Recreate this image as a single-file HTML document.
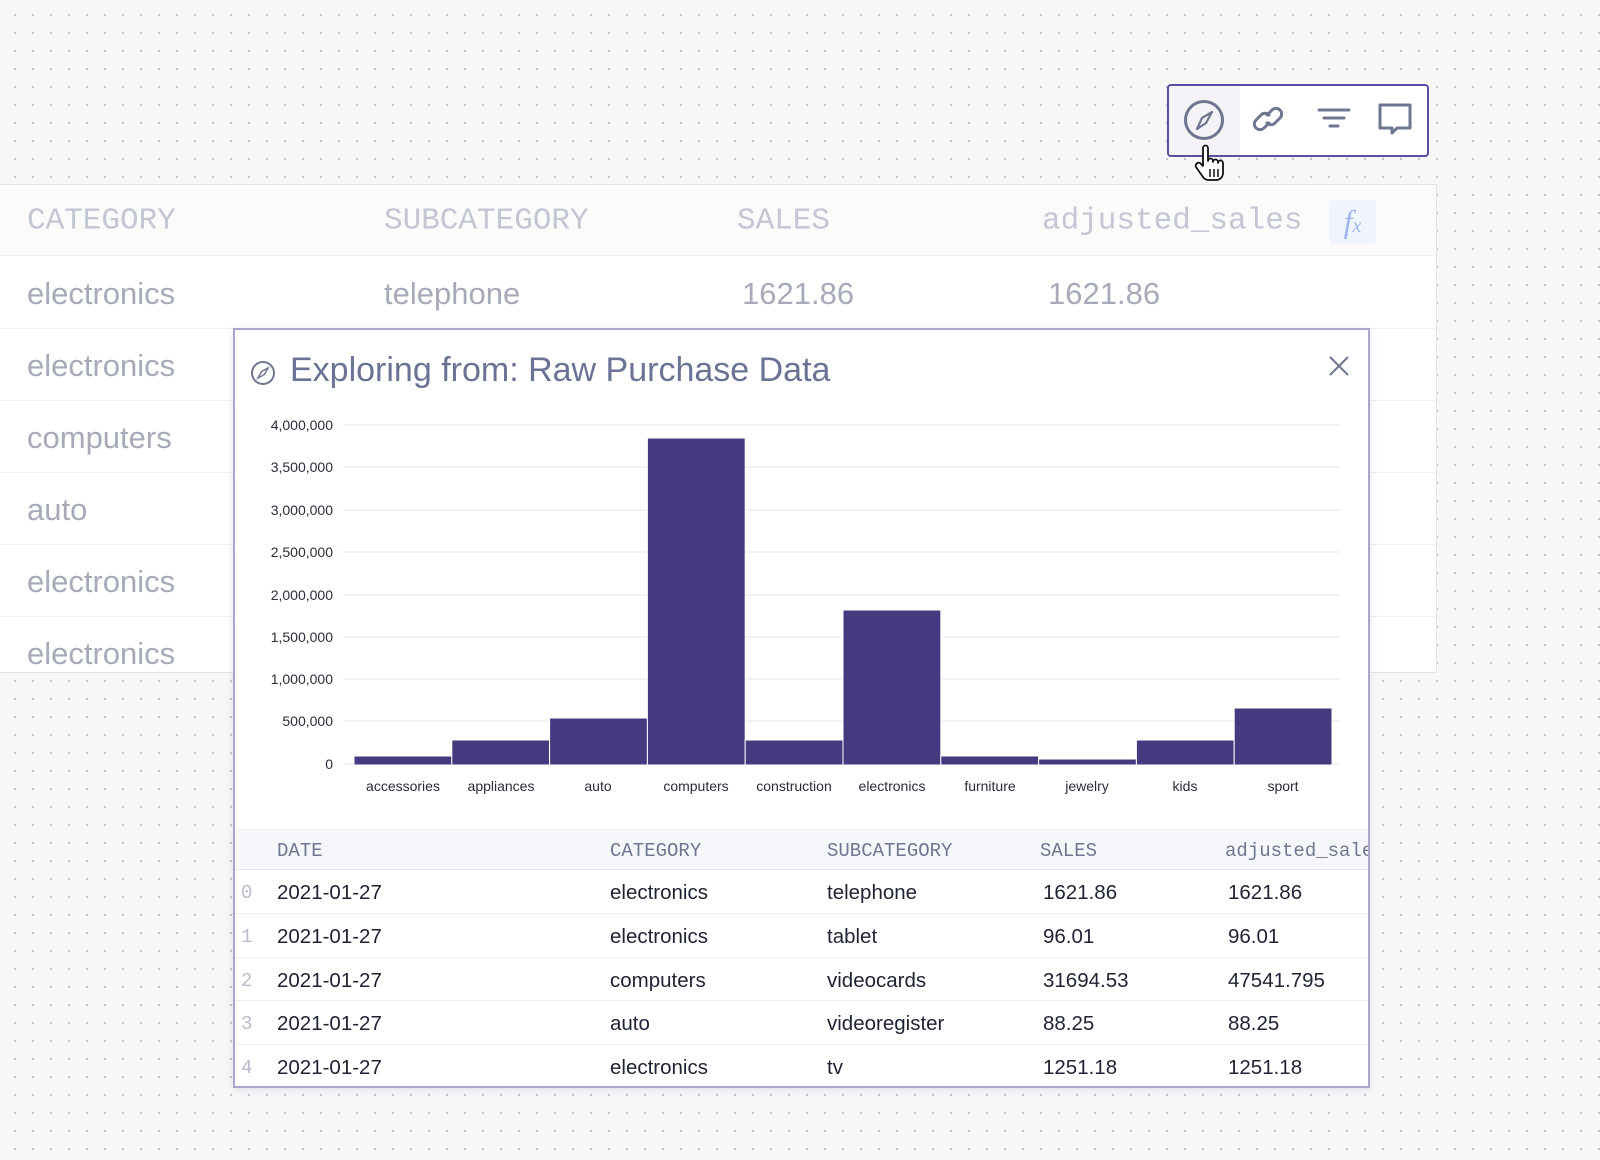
<!DOCTYPE html>
<html><head><meta charset="utf-8"><style>
*{margin:0;padding:0;box-sizing:border-box}
body{width:1600px;height:1160px;position:relative;overflow:hidden;background-color:#f8f7f8;background-image:radial-gradient(circle,#c4c3c8 1px,transparent 1.4px);background-size:18px 18px;background-position:6px 6px;font-family:"Liberation Sans",sans-serif}
.a{position:absolute;white-space:nowrap}
.bt{position:absolute;left:0;top:184px;width:1437px;height:489px;background:#fff;border:1px solid #e2e2ea;border-left:none;overflow:hidden}
.bh{position:absolute;left:0;top:0;width:100%;height:71px;background:#fbfbfc;border-bottom:1px solid #f0f0f3}
.mono{font-family:"Liberation Mono",monospace}
.bgh{color:#c3c6d3;font-size:31px;transform:translateY(-50%)}
.bgr{color:#a7aab8;font-size:31px;transform:translateY(-50%)}
.sep{position:absolute;left:0;width:100%;height:1px;background:#f0f0f3}
.modal{position:absolute;left:233px;top:328px;width:1137px;height:760px;background:#fff;border:2px solid #a9a5cc;overflow:hidden;box-shadow:0 2px 8px rgba(60,50,120,.12)}
.th{color:#6f7690;font-size:19px;transform:translateY(-50%)}
.td{color:#1f2233;font-size:20.5px;transform:translateY(-50%)}
.ix{color:#b9bcca;font-size:19px;transform:translateY(-50%)}
</style></head><body>
<div class="bt">
 <div class="bh"></div>
 <div class="sep" style="top:143px"></div><div class="sep" style="top:215px"></div><div class="sep" style="top:287px"></div><div class="sep" style="top:359px"></div><div class="sep" style="top:431px"></div>
 <div class="a mono bgh" style="left:27px;top:36px">CATEGORY</div>
 <div class="a mono bgh" style="left:384px;top:36px">SUBCATEGORY</div>
 <div class="a mono bgh" style="left:737px;top:36px">SALES</div>
 <div class="a mono bgh" style="left:1042px;top:36px">adjusted_sales</div>
 <div class="a" style="left:1329px;top:15px;width:47px;height:44px;background:#f0f4fd;border-radius:4px;color:#9fb6f0;font-family:'Liberation Serif',serif;font-style:italic;font-size:32px;text-align:center;line-height:42px">f<span style="font-size:20px">x</span></div>
 <div class="a bgr" style="left:27px;top:109px">electronics</div>
 <div class="a bgr" style="left:384px;top:109px">telephone</div>
 <div class="a bgr" style="left:742px;top:109px">1621.86</div>
 <div class="a bgr" style="left:1048px;top:109px">1621.86</div>
 <div class="a bgr" style="left:27px;top:181px">electronics</div>
 <div class="a bgr" style="left:27px;top:253px">computers</div>
 <div class="a bgr" style="left:27px;top:325px">auto</div>
 <div class="a bgr" style="left:27px;top:397px">electronics</div>
 <div class="a bgr" style="left:27px;top:469px">electronics</div>
</div>

<div class="a" style="left:1167px;top:84px;width:262px;height:73px;background:#fff;border:2px solid #5a4ea0;border-radius:4px;overflow:hidden">
 <div class="a" style="left:0;top:0;width:71px;height:71px;background:#f4f4f8"></div>
 <svg class="a" style="left:0;top:0" width="260" height="71" viewBox="0 0 260 71" fill="none" stroke="#6f7690" stroke-width="3" stroke-linecap="round" stroke-linejoin="round">
  <circle cx="35" cy="34" r="18.5"/>
  <path d="M43 26 L37 37 L28 43 L33 32 Z" stroke-width="2.2"/>
  <path d="M100 37 l-5 5 a5.5 5.5 0 0 1 -8 -8 l5 -5 a5.5 5.5 0 0 1 8 0"/>
  <path d="M98 29 l5 -5 a5.5 5.5 0 0 1 8 8 l-5 5 a5.5 5.5 0 0 1 -8 0"/>
  <path d="M150 24 h30 M155 32 h20 M161 40 h8"/>
  <path d="M211 19 h30 v23 h-13 l-5 5 v-5 h-12 Z"/>
 </svg>
</div>

<div class="modal">
 <svg class="a" style="left:14px;top:29px" width="28" height="28" viewBox="0 0 28 28" fill="none" stroke="#6f7690" stroke-width="2"><circle cx="14" cy="14" r="11"/><path d="M19 9 L15.5 15.5 L9 19 L12.5 12.5 Z" stroke-width="1.5"/></svg>
 <div class="a" style="left:55px;top:21px;font-size:34px;color:#6b7394">Exploring from: Raw Purchase Data</div>
 <svg class="a" style="left:1093px;top:25px" width="22" height="22" viewBox="0 0 22 22" stroke="#6f7690" stroke-width="2"><path d="M2 2 L20 20 M20 2 L2 20"/></svg>
 <div class="a" style="left:0;top:499px;width:100%;height:41px;background:#f6f7fa;border-top:1px solid #eeeff3;border-bottom:1px solid #e6e7ee"></div>
 <div class="sep" style="top:583px;background:#ececf1"></div><div class="sep" style="top:627px;background:#ececf1"></div><div class="sep" style="top:670px;background:#ececf1"></div><div class="sep" style="top:714px;background:#ececf1"></div>
 <div class="a mono th" style="left:42px;top:521px">DATE</div>
 <div class="a mono th" style="left:375px;top:521px">CATEGORY</div>
 <div class="a mono th" style="left:592px;top:521px">SUBCATEGORY</div>
 <div class="a mono th" style="left:805px;top:521px">SALES</div>
 <div class="a mono th" style="left:990px;top:521px">adjusted_sales</div>

 <div class="a mono ix" style="left:6px;top:563px">0</div><div class="a td" style="left:42px;top:563px">2021-01-27</div><div class="a td" style="left:375px;top:563px">electronics</div><div class="a td" style="left:592px;top:563px">telephone</div><div class="a td" style="left:808px;top:563px">1621.86</div><div class="a td" style="left:993px;top:563px">1621.86</div>
 <div class="a mono ix" style="left:6px;top:607px">1</div><div class="a td" style="left:42px;top:607px">2021-01-27</div><div class="a td" style="left:375px;top:607px">electronics</div><div class="a td" style="left:592px;top:607px">tablet</div><div class="a td" style="left:808px;top:607px">96.01</div><div class="a td" style="left:993px;top:607px">96.01</div>
 <div class="a mono ix" style="left:6px;top:651px">2</div><div class="a td" style="left:42px;top:651px">2021-01-27</div><div class="a td" style="left:375px;top:651px">computers</div><div class="a td" style="left:592px;top:651px">videocards</div><div class="a td" style="left:808px;top:651px">31694.53</div><div class="a td" style="left:993px;top:651px">47541.795</div>
 <div class="a mono ix" style="left:6px;top:694px">3</div><div class="a td" style="left:42px;top:694px">2021-01-27</div><div class="a td" style="left:375px;top:694px">auto</div><div class="a td" style="left:592px;top:694px">videoregister</div><div class="a td" style="left:808px;top:694px">88.25</div><div class="a td" style="left:993px;top:694px">88.25</div>
 <div class="a mono ix" style="left:6px;top:738px">4</div><div class="a td" style="left:42px;top:738px">2021-01-27</div><div class="a td" style="left:375px;top:738px">electronics</div><div class="a td" style="left:592px;top:738px">tv</div><div class="a td" style="left:808px;top:738px">1251.18</div><div class="a td" style="left:993px;top:738px">1251.18</div>
</div>

<svg class="a" style="left:0;top:0" width="1600" height="1160" font-family="Liberation Sans, sans-serif" font-size="14" fill="#2a2d3a">
 <g stroke="#eeeef2" stroke-width="1.5">
  <line x1="343" y1="425" x2="1340" y2="425"/><line x1="343" y1="467" x2="1340" y2="467"/><line x1="343" y1="510" x2="1340" y2="510"/><line x1="343" y1="552" x2="1340" y2="552"/><line x1="343" y1="595" x2="1340" y2="595"/><line x1="343" y1="637" x2="1340" y2="637"/><line x1="343" y1="679" x2="1340" y2="679"/><line x1="343" y1="721" x2="1340" y2="721"/><line x1="343" y1="764" x2="1340" y2="764"/>
 </g>
 <g text-anchor="end">
  <text x="333" y="430">4,000,000</text><text x="333" y="472">3,500,000</text><text x="333" y="515">3,000,000</text><text x="333" y="557">2,500,000</text><text x="333" y="600">2,000,000</text><text x="333" y="642">1,500,000</text><text x="333" y="684">1,000,000</text><text x="333" y="726">500,000</text><text x="333" y="769">0</text>
 </g>
 <g fill="#47397f" stroke="#fff" stroke-width="1">
  <rect x="354" y="756" width="97.8" height="9"/><rect x="451.8" y="740" width="97.8" height="25"/><rect x="549.6" y="718" width="97.8" height="47"/><rect x="647.4" y="438" width="97.8" height="327"/><rect x="745.2" y="740" width="97.8" height="25"/><rect x="843" y="610" width="97.8" height="155"/><rect x="940.8" y="756" width="97.8" height="9"/><rect x="1038.6" y="759" width="97.8" height="6"/><rect x="1136.4" y="740" width="97.8" height="25"/><rect x="1234.2" y="708" width="97.8" height="57"/>
 </g>
 <g text-anchor="middle">
  <text x="403" y="791">accessories</text><text x="501" y="791">appliances</text><text x="598" y="791">auto</text><text x="696" y="791">computers</text><text x="794" y="791">construction</text><text x="892" y="791">electronics</text><text x="990" y="791">furniture</text><text x="1087" y="791">jewelry</text><text x="1185" y="791">kids</text><text x="1283" y="791">sport</text>
 </g>
 <path d="M1203 148 v18 l-3 -3 a3 3 0 0 0 -4 4 l7 10 a7 7 0 0 0 6 3 h7 a7 7 0 0 0 7 -7 v-10 a2.5 2.5 0 0 0 -5 0 v-1 a2.5 2.5 0 0 0 -5 0 v-1 a2.5 2.5 0 0 0 -5 0 v-13 a2.5 2.5 0 0 0 -5 0 Z" fill="#fff" stroke="#111" stroke-width="1.8" stroke-linejoin="round"/>
 <path d="M1210 169 v8 M1214 169 v8 M1218 169 v8" stroke="#111" stroke-width="1.5"/>
</svg>
</body></html>
